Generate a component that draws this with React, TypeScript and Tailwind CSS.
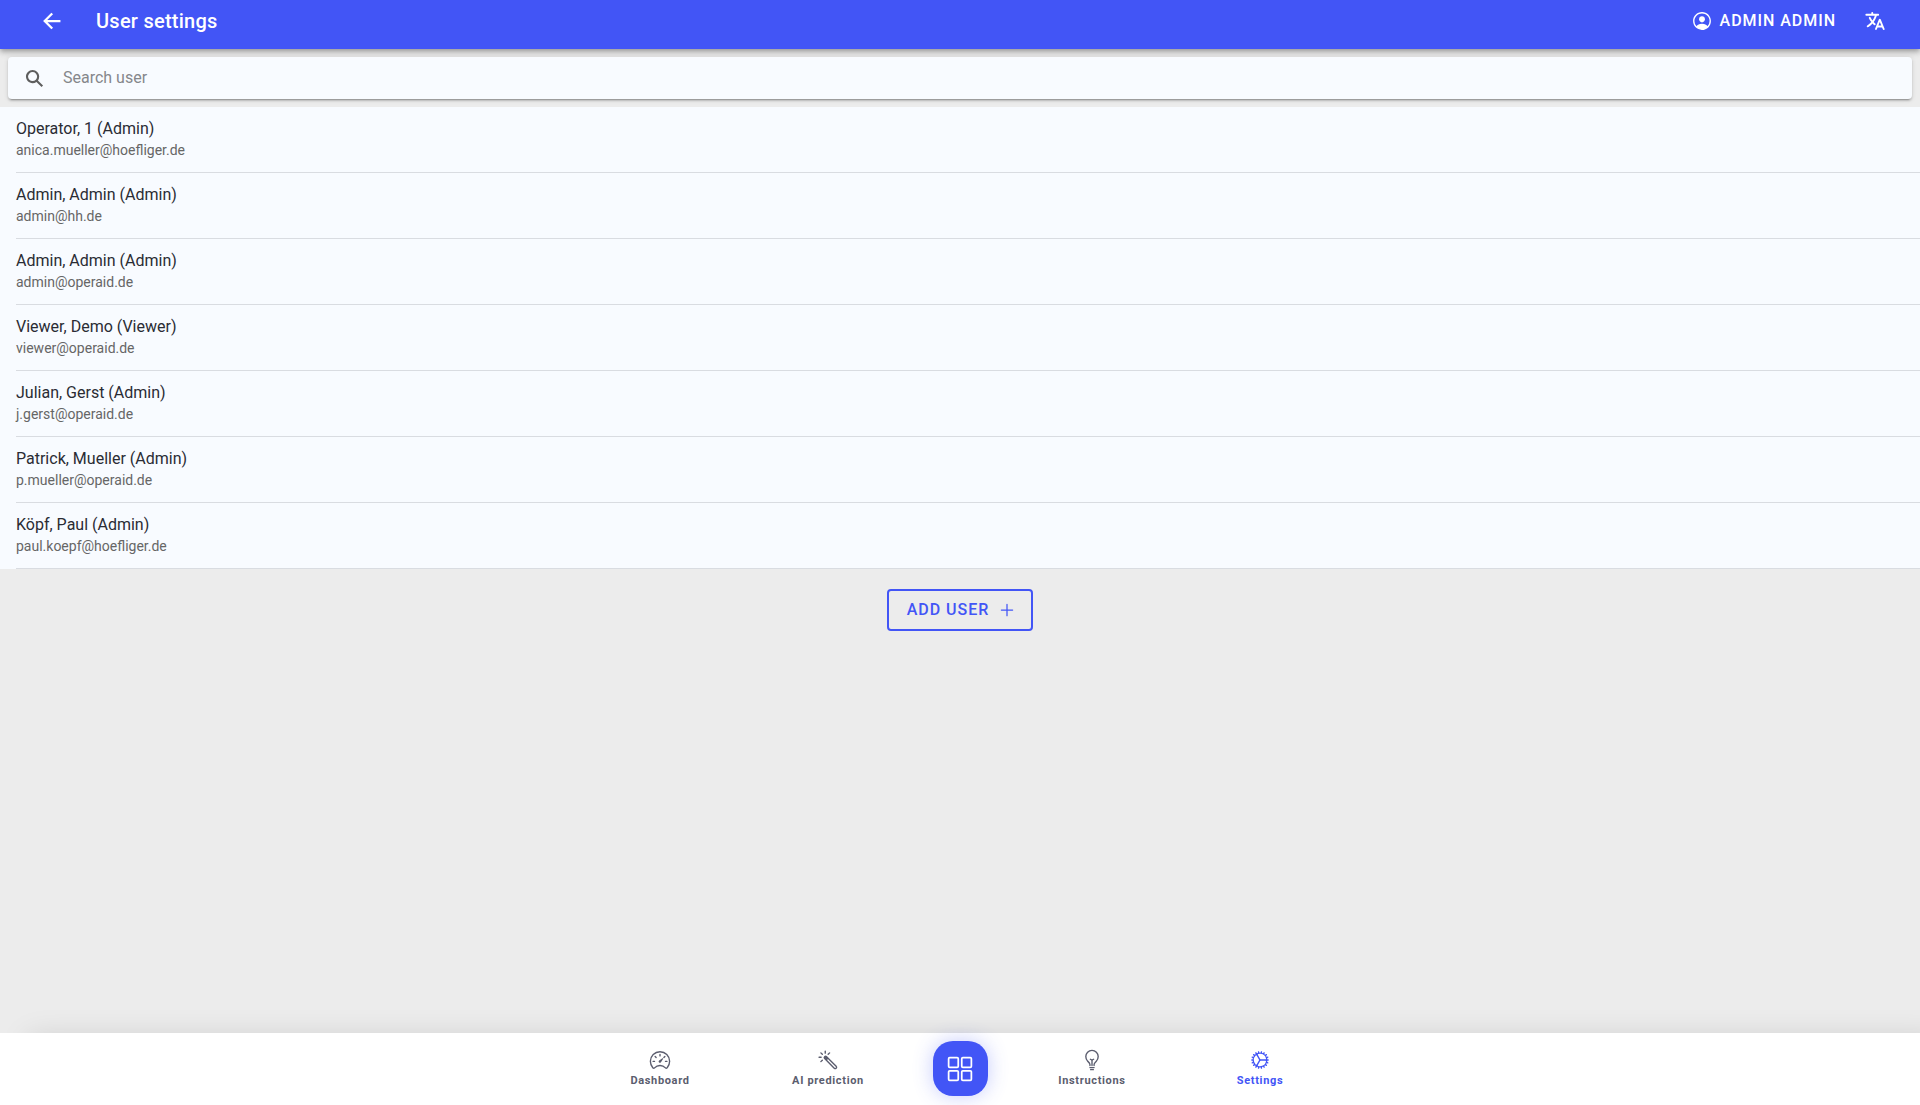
import {
  IoAdd,
  IoArrowBackSharp,
  IoBulbOutline,
  IoCogOutline,
  IoColorWandOutline,
  IoGridOutline,
  IoLanguage,
  IoPersonCircleOutline,
  IoSearchSharp,
  IoSpeedometerOutline,
} from "react-icons/io5";
import type { IconType } from "react-icons";

const users = [
  { name: "Operator, 1 (Admin)", email: "anica.mueller@hoefliger.de" },
  { name: "Admin, Admin (Admin)", email: "admin@hh.de" },
  { name: "Admin, Admin (Admin)", email: "admin@operaid.de" },
  { name: "Viewer, Demo (Viewer)", email: "viewer@operaid.de" },
  { name: "Julian, Gerst (Admin)", email: "j.gerst@operaid.de" },
  { name: "Patrick, Mueller (Admin)", email: "p.mueller@operaid.de" },
  { name: "Köpf, Paul (Admin)", email: "paul.koepf@hoefliger.de" },
];

function Header() {
  return (
    <header className="relative z-10 flex items-center bg-[#4255f6] pt-[5px] pr-[33px] pb-3 pl-8 text-white shadow-[0_2px_4px_-1px_rgba(0,0,0,0.2),0_4px_5px_0_rgba(0,0,0,0.14),0_1px_10px_0_rgba(0,0,0,0.12)]">
      <button type="button" aria-label="Back" className="flex h-8 w-10 items-center justify-center">
        <IoArrowBackSharp className="size-6" />
      </button>
      <h1 className="ml-6 flex-1 text-xl font-medium tracking-[0.0125em]">User settings</h1>
      <button type="button" className="flex items-center gap-[7px] font-medium tracking-[0.06em]">
        <IoPersonCircleOutline className="size-[22px]" />
        ADMIN ADMIN
      </button>
      <button type="button" aria-label="Change language" className="ml-[27px] flex size-6 items-center justify-center">
        <IoLanguage className="size-[22px]" />
      </button>
    </header>
  );
}

function SearchBar() {
  return (
    <div className="p-2">
      <label className="relative z-20 flex h-[42px] items-center rounded-sm bg-[#f8fbff] pl-4 shadow-[0_2px_2px_0_rgba(0,0,0,0.14),0_3px_1px_-2px_rgba(0,0,0,0.2),0_1px_5px_0_rgba(0,0,0,0.12)]">
        <IoSearchSharp className="size-[21px] text-[#5e5e5e]" />
        <input
          type="text"
          aria-label="Search user"
          placeholder="Search user"
          className="ml-[18px] min-w-0 flex-1 bg-transparent text-base outline-none placeholder:text-[#85878b]"
        />
      </label>
    </div>
  );
}

function Tab({ icon: Icon, label, active }: { icon: IconType; label: string; active?: boolean }) {
  return (
    <a
      href="#"
      className={`flex w-[168px] flex-col items-center gap-0.5 text-[11px] leading-4 font-bold tracking-[0.06em] ${active ? "text-[#4255f6]" : "text-[#5b5d6e]"}`}
    >
      <Icon className="size-[22px]" />
      {label}
    </a>
  );
}

export default function App() {
  return (
    <div className="flex min-h-screen flex-col overflow-hidden bg-[#ececec] font-['Roboto',sans-serif]">
      <Header />
      <main className="flex flex-1 flex-col">
        <SearchBar />
        <ul className="bg-[#f8fbff] pl-4">
          {users.map((user) => (
            <li key={user.email} className="border-b border-[#d9dce1] pt-[11px] pb-3">
              <h2 className="text-base leading-[22px] text-[#2a2c34]">{user.name}</h2>
              <p className="text-sm leading-5 text-[#666666]">{user.email}</p>
            </li>
          ))}
        </ul>
        <button
          type="button"
          className="mt-5 flex h-[42px] items-center gap-2 self-center rounded border-2 border-[#4255f6] pr-3.5 pl-[18px] font-medium tracking-[0.06em] text-[#4255f6]"
        >
          ADD USER
          <IoAdd className="size-5" />
        </button>
      </main>
      <nav className="flex h-[72px] items-center justify-center bg-white pb-px shadow-[24px_0_30px_-4px_rgba(0,0,0,0.13)]">
        <Tab icon={IoSpeedometerOutline} label="Dashboard" />
        <Tab icon={IoColorWandOutline} label="AI prediction" />
        <div className="flex w-24 justify-center">
          <button
            type="button"
            aria-label="Menu"
            className="flex size-[55px] items-center justify-center rounded-[20px] bg-[#4255f6] text-white shadow-[0_0_20px_rgba(66,85,246,0.3)]"
          >
            <IoGridOutline className="size-7" />
          </button>
        </div>
        <Tab icon={IoBulbOutline} label="Instructions" />
        <Tab icon={IoCogOutline} label="Settings" active />
      </nav>
    </div>
  );
}
